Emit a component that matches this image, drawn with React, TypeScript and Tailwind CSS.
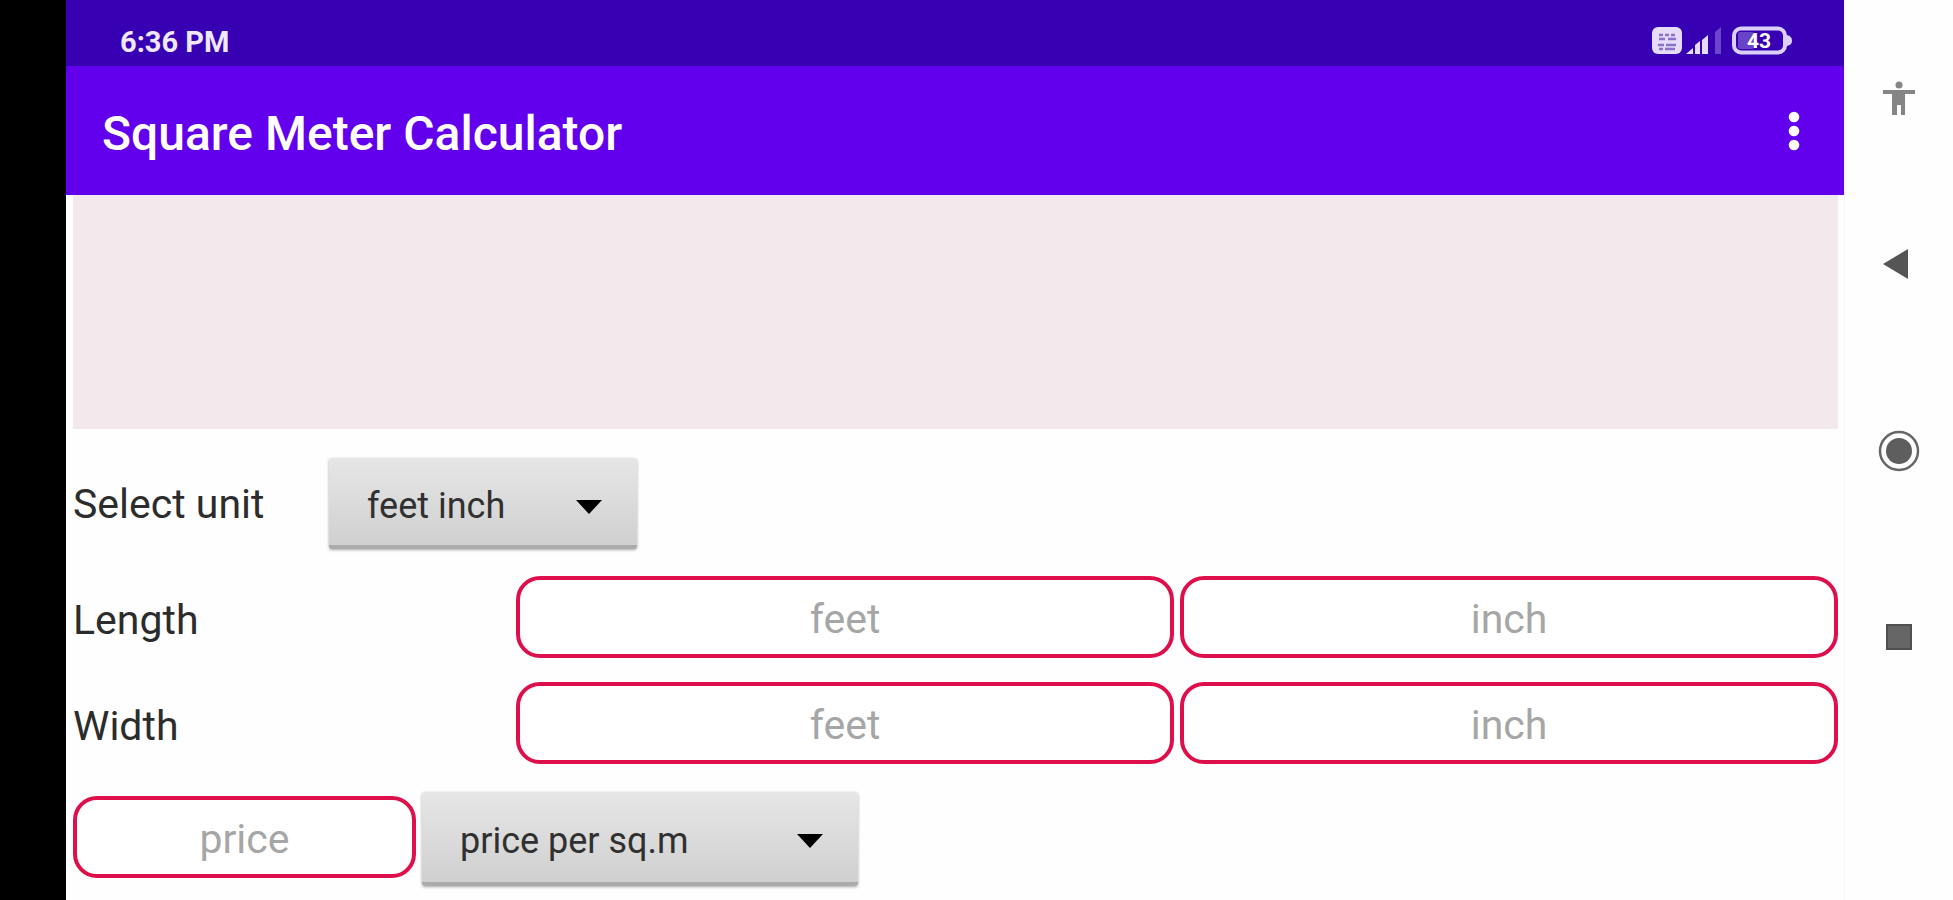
import React from "react";

const FIELD =
  "h-[82px] w-full min-w-0 rounded-[24px] border-4 border-[#de104c] bg-white pt-1 text-center text-[41px] text-[#333] outline-none placeholder:text-[#a6a6a6] placeholder:opacity-100";

function Spinner({ id, label, options, className }: { id: string; label: string; options: string[]; className: string }) {
  return (
    <div className={`relative ${className}`}>
      <select
        id={id}
        aria-label={label}
        className="h-full w-full appearance-none rounded-[3px] border-b-4 border-[#ababab] bg-linear-to-b from-[#e6e6e6] to-[#d0d0d0] pl-[38px] pr-20 pt-2 text-[36px] text-[#303030] shadow-[0_1px_3px_rgba(0,0,0,0.35)] outline-none"
      >
        {options.map((o) => (
          <option key={o}>{o}</option>
        ))}
      </select>
      <svg className="pointer-events-none absolute right-[35px] top-[42px]" width="26" height="14" viewBox="0 0 26 14" aria-hidden="true">
        <path d="M0 0H26L13 14Z" fill="#000" />
      </svg>
    </div>
  );
}

function Dimension({ name }: { name: string }) {
  return (
    <div className="flex items-center">
      <label htmlFor={`${name}-feet`} className="w-1/4 shrink-0 pt-1.5 text-[41px] leading-[48px]">
        {name}
      </label>
      <div className="flex flex-1 gap-1.5 pl-0.5">
        <input id={`${name}-feet`} type="text" inputMode="decimal" placeholder="feet" className={FIELD} />
        <input aria-label={`${name} inch`} type="text" inputMode="decimal" placeholder="inch" className={FIELD} />
      </div>
    </div>
  );
}

function StatusIcons() {
  return (
    <svg width="142" height="30" viewBox="0 0 142 30" aria-hidden="true">
      <rect x="1" y="1" width="30" height="27" rx="6" fill="#e6dcfa" />
      <path d="M8 9H12M14 9H18M20 9H24M8 13H14M17 13H25M7 19H13M15 19H25M8 23H12M14 23H24" stroke="#8a72cc" strokeWidth="2.400" />
      <path d="M35 28L42 22V28ZM44 28V19L49 15V28ZM51 28V14L57 9V28Z" fill="#e6dcfa" />
      <path d="M64 28V6L70 1V28Z" fill="#6b45cc" />
      <rect x="83" y="2.500" width="51" height="24" rx="7" fill="none" stroke="#dccffa" strokeWidth="4" />
      <path d="M136 9Q141 10 141 14.500Q141 19 136 20Z" fill="#dccffa" />
      <rect x="87" y="6" width="16" height="17" rx="2" fill="#6844c6" />
      <text x="108" y="22" textAnchor="middle" fontSize="21" fontWeight="700" fill="#fff">
        43
      </text>
    </svg>
  );
}

export default function App() {
  return (
    <div className="flex h-screen overflow-hidden bg-[#fefefe] font-['Roboto',sans-serif] text-[#2c2c2c]">
      <div className="w-[66px] shrink-0 bg-black" />
      <div className="flex min-w-0 flex-1 flex-col">
        <div className="flex h-[66px] shrink-0 items-center justify-between bg-[#3700b3] pl-[54px] pr-[51px] pt-4 text-[#efe8ff]">
          <span className="pt-0.5 text-[29px] font-bold leading-[36px]">6:36 PM</span>
          <StatusIcons />
        </div>
        <header className="flex h-[129px] shrink-0 items-center justify-between bg-[#6200ee] pl-9 pr-[38px] text-white">
          <h1 className="pt-1.5 text-[48px] font-medium leading-[56px]">Square Meter Calculator</h1>
          <button type="button" aria-label="More options" className="p-1.5">
            <svg width="12" height="42" viewBox="0 0 12 42" fill="#fff" aria-hidden="true">
              <circle cx="6" cy="7" r="5.300" />
              <circle cx="6" cy="21" r="5.300" />
              <circle cx="6" cy="35" r="5.300" />
            </svg>
          </button>
        </header>
        <main className="flex flex-col pl-[7px] pr-1.5">
          <div className="h-[234px] bg-[#f3e8eb]" />
          <div className="flex h-[149px] items-center">
            <label htmlFor="unit" className="w-64 text-[41px] leading-[48px]">
              Select unit
            </label>
            <Spinner id="unit" label="Select unit" options={["feet inch", "meter", "centimeter"]} className="h-[91px] w-[308px]" />
          </div>
          <div className="-mt-0.5 flex flex-col gap-6">
            <Dimension name="Length" />
            <Dimension name="Width" />
          </div>
          <div className="mt-7 flex items-start gap-1.5">
            <div className="w-[343px] pt-1">
              <input aria-label="price" type="text" inputMode="decimal" placeholder="price" className={FIELD} />
            </div>
            <Spinner id="price-unit" label="Price unit" options={["price per sq.m", "price per sq.ft"]} className="h-[94px] w-[436px]" />
          </div>
        </main>
      </div>
      <nav className="flex w-[109px] shrink-0 flex-col items-center border-l border-[#f5f5f8] pt-[78px]">
        <button type="button" aria-label="Accessibility" className="flex h-10 items-center">
          <svg width="32" height="34" viewBox="0 0 32 34" fill="#858585" aria-hidden="true">
            <circle cx="16" cy="4" r="3.500" />
            <path d="M0 9H32V13H22V34H18V24H14V34H9V13H0Z" />
          </svg>
        </button>
        <button type="button" aria-label="Back" className="mt-[126px] flex h-10 items-center pr-1.5">
          <svg width="26" height="30" viewBox="0 0 26 30" aria-hidden="true">
            <path d="M0 15L25 0V30Z" fill="#555" />
          </svg>
        </button>
        <button type="button" aria-label="Home" className="mt-[146px] flex h-[42px] items-center">
          <svg width="42" height="42" viewBox="0 0 42 42" aria-hidden="true">
            <circle cx="21" cy="21" r="19" fill="none" stroke="#666" strokeWidth="2.500" />
            <circle cx="21" cy="21" r="13" fill="#5e5e5e" />
          </svg>
        </button>
        <button type="button" aria-label="Recent apps" className="mt-[145px] flex h-10 items-center">
          <svg width="26" height="26" viewBox="0 0 26 26" aria-hidden="true">
            <rect x="1" y="1" width="24" height="24" fill="#666" stroke="#505050" strokeWidth="2" />
          </svg>
        </button>
      </nav>
    </div>
  );
}
